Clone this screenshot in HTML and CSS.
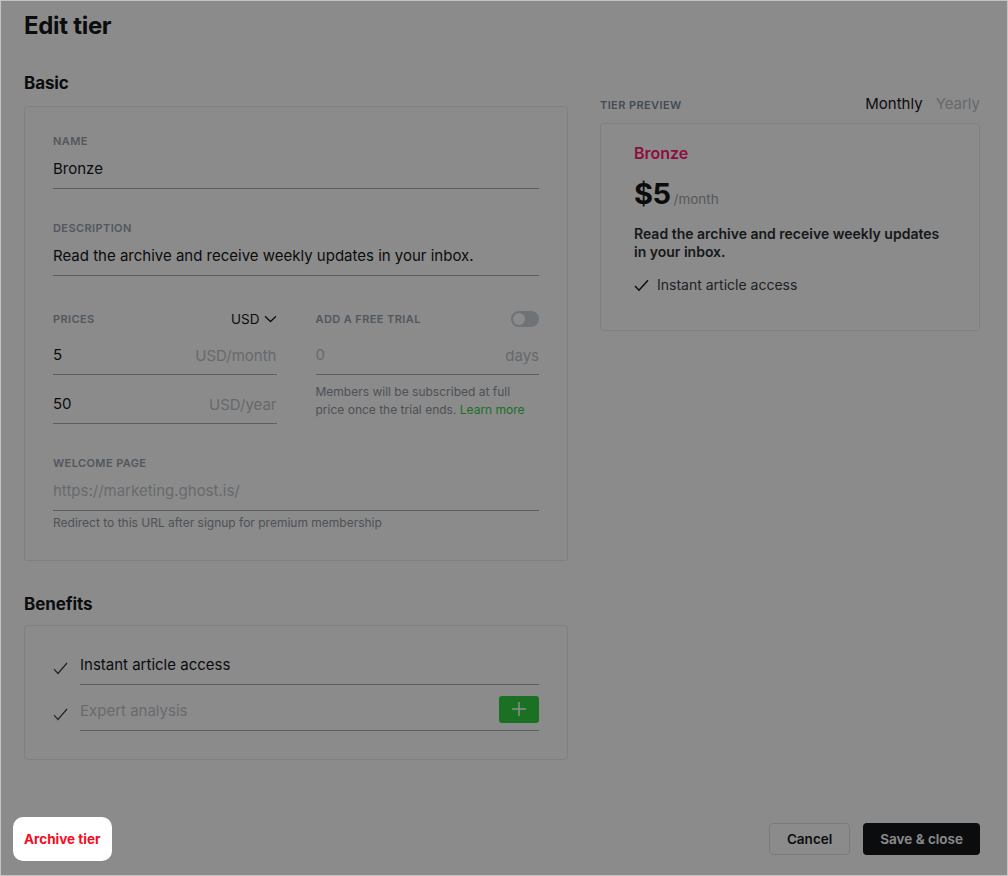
FILE: index.html
```html
<!DOCTYPE html>
<html lang="en">

<head>
    <meta charset="UTF-8">
    <title>Edit tier</title>
    <link rel="stylesheet" href="styles.css">
</head>

<body>
    <div class="modal">
        <h1 class="title">Edit tier</h1>
        <div class="layout">
            <div class="main">
                <h2 class="section-title">Basic</h2>
                <div class="card basic">
                    <div class="field">
                        <div class="label-row"><span class="label">Name</span></div>
                        <div class="input-line"><input type="text" value="Bronze"></div>
                    </div>
                    <div class="field">
                        <div class="label-row"><span class="label">Description</span></div>
                        <div class="input-line"><input type="text" value="Read the archive and receive weekly updates in your inbox."></div>
                    </div>
                    <div class="field price-grid">
                        <div class="prices">
                            <div class="label-row tall">
                                <span class="label">Prices</span>
                                <span class="currency">USD
                                    <svg width="13" height="8" viewBox="0 0 13 8"><path d="M1 1.2 L6.5 6.5 L12 1.2" fill="none" stroke="currentColor" stroke-width="1.3"/></svg>
                                </span>
                            </div>
                            <div class="input-line"><input type="text" value="5"><span class="suffix">USD/month</span></div>
                            <div class="input-line second"><input type="text" value="50"><span class="suffix">USD/year</span></div>
                        </div>
                        <div class="trial">
                            <div class="label-row tall">
                                <span class="label">Add a free trial</span>
                                <span class="toggle"></span>
                            </div>
                            <div class="input-line"><input type="text" placeholder="0" disabled><span class="suffix">days</span></div>
                            <p class="help">Members will be subscribed at full price once the trial ends. <a href="/">Learn more</a></p>
                        </div>
                    </div>
                    <div class="field">
                        <div class="label-row"><span class="label">Welcome page</span></div>
                        <div class="input-line"><input type="text" placeholder="https://marketing.ghost.is/"></div>
                        <p class="hint">Redirect to this URL after signup for premium membership</p>
                    </div>
                </div>

                <h2 class="section-title benefits-title">Benefits</h2>
                <div class="card benefits">
                    <div class="benefit">
                        <svg class="check" width="15" height="13" viewBox="0 0 15 13"><path d="M1 7.2 L5 11.5 L14 1" fill="none" stroke="currentColor" stroke-width="1.2"/></svg>
                        <div class="input-line"><input type="text" value="Instant article access"></div>
                    </div>
                    <div class="benefit">
                        <svg class="check" width="15" height="13" viewBox="0 0 15 13"><path d="M1 7.2 L5 11.5 L14 1" fill="none" stroke="currentColor" stroke-width="1.2"/></svg>
                        <div class="input-line">
                            <input type="text" placeholder="Expert analysis">
                            <button class="add-btn">
                                <svg width="16" height="16" viewBox="0 0 16 16"><path d="M8 1 V15 M1 8 H15" stroke="#fff" stroke-width="1.5"/></svg>
                            </button>
                        </div>
                    </div>
                </div>
            </div>

            <div class="side">
                <div class="preview-head">
                    <span class="label dark">Tier preview</span>
                    <div class="period">
                        <span class="active">Monthly</span>
                        <span>Yearly</span>
                    </div>
                </div>
                <div class="card preview">
                    <div class="tier-name">Bronze</div>
                    <div class="tier-price"><span class="amount">$5</span><span class="per">/month</span></div>
                    <div class="tier-desc">Read the archive and receive weekly updates in your inbox.</div>
                    <ul class="tier-benefits">
                        <li>
                            <svg width="15" height="13" viewBox="0 0 15 13"><path d="M1 7 L5 11.2 L14 1.2" fill="none" stroke="currentColor" stroke-width="1.5"/></svg>
                            Instant article access
                        </li>
                    </ul>
                </div>
            </div>
        </div>

        <div class="footer">
            <button class="archive-btn">Archive tier</button>
            <div class="actions">
                <button class="btn cancel">Cancel</button>
                <button class="btn save">Save &amp; close</button>
            </div>
        </div>
    </div>
</body>

</html>
```

FILE: styles.css
```css
* {
    box-sizing: border-box;
}

body {
    margin: 0;
    font-family: Inter, "Noto Sans", sans-serif;
    color: #15171a;
    background: #fff;
}

.modal {
    width: 1008px;
    height: 876px;
    border: 1px solid #c3c3c3;
    padding: 10px 27px 14px 23px;
    display: flex;
    flex-direction: column;
    overflow: hidden;
}

.title {
    margin: 0;
    font-size: 24px;
    line-height: 30px;
    font-weight: 700;
    letter-spacing: -0.3px;
}

.layout {
    display: flex;
    gap: 32px;
    margin-top: 30px;
}

.main {
    width: 544px;
}

.side {
    width: 380px;
    margin-top: 22px;
}

.section-title {
    margin: 0 0 11px;
    font-size: 17px;
    line-height: 24px;
    font-weight: 700;
    letter-spacing: -0.1px;
}

.benefits-title {
    margin-top: 31px;
    margin-bottom: 9px;
}

.card {
    border: 1px solid #e8ebee;
    border-radius: 3px;
}

.basic {
    padding: 24px 28px 29px;
}

.field + .field {
    margin-top: 29px;
}

.label-row {
    height: 20px;
    margin-bottom: 4px;
    display: flex;
    align-items: center;
    justify-content: space-between;
}

.label-row.tall {
    height: 28px;
    margin-bottom: 8px;
}

.label {
    font-size: 11px;
    font-weight: 600;
    letter-spacing: 0.4px;
    text-transform: uppercase;
    color: #95a1ad;
}

.label.dark {
    color: #7c8b9a;
    padding-top: 3px;
}

.input-line {
    display: flex;
    align-items: center;
    height: 34px;
    padding: 3px 0 8px;
    border-bottom: 1px solid #aab1bb;
}

.input-line input {
    flex: 1;
    min-width: 0;
    height: 22px;
    padding: 0;
    border: 0;
    outline: none;
    background: transparent;
    font-family: inherit;
    font-size: 15px;
    line-height: 22px;
    color: #15171a;
}

.input-line input::placeholder {
    color: #bec4ca;
}

.input-line input:disabled {
    background: transparent;
}

.suffix {
    font-size: 15px;
    color: #bcc2c8;
}

.price-grid {
    display: flex;
    gap: 39px;
}

.prices,
.trial {
    flex: 1 1 0;
    min-width: 0;
}

.input-line.second {
    margin-top: 15px;
}

.currency {
    display: flex;
    align-items: center;
    gap: 4px;
    font-size: 13.5px;
    color: #15171a;
}

.toggle {
    position: relative;
    width: 28px;
    height: 16px;
    border-radius: 8px;
    background: #cdd3d9;
}

.toggle::after {
    content: "";
    position: absolute;
    left: 2px;
    top: 2px;
    width: 12px;
    height: 12px;
    border-radius: 50%;
    background: #fff;
}

.help {
    margin: 8px 0 0;
    font-size: 12px;
    line-height: 18px;
    color: #8e969f;
}

.help a {
    color: #30cf43;
    text-decoration: none;
}

.hint {
    margin: 4px 0 0;
    font-size: 12px;
    line-height: 16px;
    color: #8e969f;
}

.benefits {
    padding: 25px 28px 28px;
}

.benefit {
    display: flex;
    align-items: center;
}

.benefit + .benefit {
    margin-top: 12px;
}

.benefit .check {
    flex: none;
    margin-right: 12px;
    color: #394047;
}

.benefit .input-line {
    flex: 1;
}

.add-btn {
    flex: none;
    width: 40px;
    height: 27px;
    margin-top: -4px;
    border: 0;
    border-radius: 3px;
    background: #30cf43;
    display: flex;
    align-items: center;
    justify-content: center;
    padding: 0;
}

.preview-head {
    height: 20px;
    margin-bottom: 10px;
    display: flex;
    align-items: center;
    justify-content: space-between;
}

.period {
    display: flex;
    gap: 13px;
    font-size: 15px;
    color: #bcc2c8;
}

.period .active {
    color: #15171a;
}

.preview {
    padding: 18px 33px 35px;
}

.tier-name {
    font-size: 16px;
    line-height: 22px;
    font-weight: 600;
    color: #ff1a75;
}

.tier-price {
    height: 34px;
    margin-top: 13px;
    display: flex;
    align-items: baseline;
    gap: 3px;
    line-height: 34px;
}

.tier-price .amount {
    font-size: 29px;
    font-weight: 700;
    letter-spacing: -0.5px;
}

.tier-price .per {
    font-size: 13.5px;
    color: #9da3aa;
}

.tier-desc {
    margin-top: 14px;
    font-size: 14px;
    line-height: 18px;
    font-weight: 600;
    color: #2b2f33;
}

.tier-benefits {
    list-style: none;
    margin: 14px 0 0;
    padding: 0;
}

.tier-benefits li {
    display: flex;
    align-items: center;
    gap: 8px;
    font-size: 14px;
    line-height: 20px;
    color: #394047;
}

.tier-benefits svg {
    color: #15171a;
}

.footer {
    margin-top: auto;
    display: flex;
    align-items: center;
    justify-content: space-between;
}

.archive-btn {
    position: relative;
    z-index: 10;
    height: 44px;
    margin-left: -11px;
    padding: 0 11px;
    border: 0;
    border-radius: 10px;
    background: #fff;
    font-family: inherit;
    font-size: 13.5px;
    font-weight: 700;
    color: #f50b23;
    box-shadow: 0 0 0 2000px rgba(0, 0, 0, 0.455);
}

.actions {
    display: flex;
    gap: 13px;
}

.btn {
    height: 32px;
    padding: 0 17px;
    border-radius: 4px;
    font-family: inherit;
    font-size: 13.5px;
    font-weight: 600;
}

.cancel {
    border: 1px solid #dde1e5;
    background: #fff;
    color: #15171a;
}

.save {
    border: 0;
    background: #15171a;
    color: #fff;
}
```
